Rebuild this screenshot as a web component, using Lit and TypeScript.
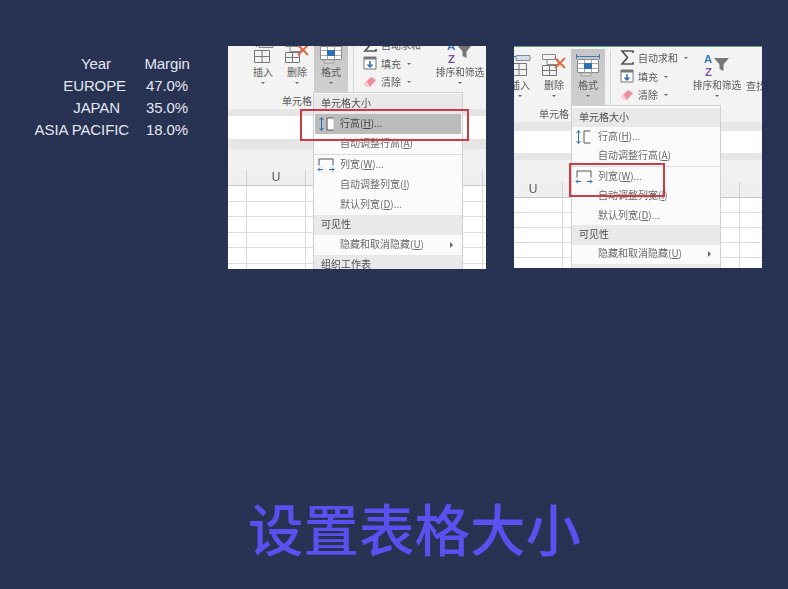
import { LitElement, html, css, svg } from "lit";
import { customElement, property } from "lit/decorators.js";

interface ShotConfig {
  width: number; height: number; left: number; top: number; greenTop: boolean;
  bands: number[]; gridOffset: number; uCell: number; rowH: number;
  menu: { x: number; y: number; pad: number; rowH: number };
  hot: boolean; red: { x: number; y: number; w: number; h: number };
}

const icons = {
  insert: svg`<svg width="26" height="24" viewBox="0 0 26 24" fill="none"><path d="M9 2.500h14v5H9z" fill="#cfe0ee" stroke="#8a8a8a"/><path d="M7 0.500 2 3.500l5 3M2 3.500h7" stroke="#3a7ab8" stroke-width="1.200"/><path d="M4.500 10.500h15v12h-15zM4.500 16.500h15M12 10.500v12" stroke="#777"/></svg>`,
  del: svg`<svg width="26" height="24" viewBox="0 0 26 24" fill="none"><path d="M1.500 1.500h13v5h-13zM6 6.500h11v5H6z" stroke="#8a8a8a"/><path d="M1.500 12.500h14v10h-14zM1.500 17.500h14M8.500 12.500v10" stroke="#777"/><path d="m14 5 10 10M24 5 14 15" stroke="#e2653f" stroke-width="1.800"/></svg>`,
  format: svg`<svg width="24" height="24" viewBox="0 0 24 24" fill="none"><path d="M0.500 1v5M23.500 1v5M1 3.500h22" stroke="#3a7ab8"/><path d="M1.500 6.500h21v13h-21z" fill="#fff" stroke="#888"/><path d="M8.500 6.500v13M15.500 6.500v13M1.500 10.500h21M1.500 15.500h21" stroke="#aaa"/><path d="M8 10h8v6H8z" fill="#2f6fb5"/><path d="M5 20h10v3H5z" fill="#ddd" stroke="#999"/></svg>`,
  sum: svg`<svg width="14" height="15" viewBox="0 0 14 15" fill="none"><path d="M13 3V1H2l5.500 6.500L2 14h11v-2" stroke="#555" stroke-width="1.700"/></svg>`,
  fill: svg`<svg width="14" height="14" viewBox="0 0 14 14" fill="none"><path d="M1 1h12v12H1z" fill="#fff" stroke="#777"/><path d="M1 1h12v2.500H1z" fill="#777"/><path d="M7 5v6M4.500 8.500 7 11l2.500-2.500" stroke="#2b6fb7" stroke-width="1.500"/></svg>`,
  eraser: svg`<svg width="14" height="12" viewBox="0 0 14 12"><path d="m1 8 7-7 5 3-6 7H4z" fill="#ef8d9c"/><path d="M1 8l3 3h3L4 6z" fill="#f7d3d8"/></svg>`,
  sort: svg`<svg width="26" height="24" viewBox="0 0 26 24" fill="none"><path d="M10 5h15l-5.500 6.500V18L15.500 16v-4.500z" fill="#777"/><text x="0" y="10" font-family="Liberation Sans" font-weight="700" font-size="11.500" fill="#3a7ab8">A</text><text x="1" y="23" font-family="Liberation Sans" font-weight="700" font-size="11.500" fill="#7f4da8">Z</text></svg>`,
  rowIcon: svg`<svg width="17" height="16" viewBox="0 0 17 16" fill="none"><path d="M3.500 2v12M1.500 4 3.500 1.500 5.500 4M1.500 12l2 2.500 2-2.500" stroke="#2b6fb7"/><path d="M15.500 2H9v12h6.500" stroke="#555" fill="#fff"/></svg>`,
  colIcon: svg`<svg width="18" height="15" viewBox="0 0 18 15" fill="none"><path d="M2 8V1.500h14V8" stroke="#555"/><path d="M1 12h5M12 12h5M3 10l-2 2 2 2M15 10l2 2-2 2" stroke="#2b6fb7"/></svg>`,
};

@customElement("excel-shot")
class ExcelShot extends LitElement {
  @property({ attribute: false }) config!: ShotConfig;

  static styles = css`
    :host { display: block; flex: none; }
    .shot { position: relative; overflow: hidden; background: #fff; font-family: "Noto Sans CJK SC", sans-serif; color: #5a5a5a; font-size: 10px; }
    .sheet { filter: blur(0.45px); }
    .green { position: absolute; top: 0; left: 0; right: 0; height: 1px; background: #5f9f7a; z-index: 1; }
    .ribbon { display: flex; height: 76px; background: #f3f3f3; box-sizing: border-box; padding-top: 3px; }
    .group { display: flex; flex-direction: column; flex: none; width: 102px; }
    .btns { display: flex; height: 56px; }
    .btn { width: 34px; display: flex; flex-direction: column; align-items: center; box-sizing: border-box; padding-top: 3px; }
    .btn.active { background: linear-gradient(#c6c6c6, #cfcfcf); }
    .btn svg { flex: none; }
    .ic { height: 26px; display: flex; align-items: center; justify-content: center; }
    .lbl { line-height: 14px; white-space: nowrap; }
    .caret { margin-top: 3px; width: 0; height: 0; border: 2px solid transparent; border-top: 2.500px solid #666; }
    .gname { text-align: center; line-height: 17px; font-size: 10px; }
    .vsep { width: 1px; height: 68px; background: #d4d4d4; margin: 1px 4px 0 5px; flex: none; }
    .edit { width: 75px; flex: none; display: flex; flex-direction: column; gap: 3.500px; padding: 1px 0 0 5px; box-sizing: border-box; }
    .edit div { display: flex; align-items: center; gap: 4px; height: 15px; white-space: nowrap; }
    .edit i { width: 0; height: 0; border: 2px solid transparent; border-top: 2.500px solid #666; margin-top: 3px; margin-left: 2px; }
    .sort { width: 54px; flex: none; display: flex; flex-direction: column; align-items: center; padding-top: 3px; }
    .sort .lbl { font-size: 9.700px; }
    .sort .caret { margin-top: 3px; }
    .find { flex: none; padding: 29px 0 0 2px; white-space: nowrap; font-size: 10px; }
    .band { background: #e6e6e6; }
    .formula { background: #fff; }
    .light { background: #f1f1f1; }
    .head { display: flex; background: #efefef; border-bottom: 1px solid #c9c9c9; height: 16px; box-sizing: border-box; font-family: "Liberation Sans", sans-serif; font-size: 12px; line-height: 15px; }
    .cell { flex: none; width: 59px; box-sizing: border-box; border-right: 1px solid #d0d0d0; text-align: center; }
    .row { display: flex; border-bottom: 1px solid #dcdcdc; box-sizing: border-box; background: #fff; }
    .row .cell { border-right-color: #dcdcdc; }
    .menu { position: absolute; width: 150px; bottom: -1px; background: #fbfbfb; border: 1px solid #d0d0d0; border-bottom: 0; box-sizing: border-box; filter: blur(0.45px); }
    .section { background: #e9e9e9; padding: 0 0 3px 7px; box-sizing: border-box; color: #4d4d4d; display: flex; align-items: center; }
    .item { padding: 0 0 3px 26px; box-sizing: border-box; color: #6b6b6b; display: flex; align-items: center; position: relative; white-space: nowrap; }
    .item.hot { background: #bcbcbc; margin: 0 1px; padding-left: 25px; color: #444; }
    .item svg { position: absolute; left: 3px; top: 50%; transform: translateY(-50%); }
    .item b { position: absolute; right: 9px; top: 50%; margin-top: -3px; width: 0; height: 0; border: 3px solid transparent; border-left: 3.500px solid #666; border-right: 0; }
    .line { height: 1px; background: #dcdcdc; }
    u { text-decoration-thickness: 1px; }
    .red { position: absolute; border: 2px solid #d03a44; box-sizing: border-box; }
  `;

  render() {
    const c = this.config;
    const rows = [0, 1, 2, 3, 4, 5];
    const cells = [0, 1, 2, 3, 4, 5];
    const headCells = cells.map((i) => html`<div class="cell">${i === c.uCell ? "U" : ""}</div>`);
    const m = c.menu;
    const h = `height:${m.rowH}px`;
    return html`
      <div class="shot" style="width:${c.width}px;height:${c.height}px">
        ${c.greenTop ? html`<div class="green"></div>` : ""}
        <div class="sheet" style="margin-top:${c.top}px">
          <div class="ribbon">
            <div style="display:flex;flex:none;margin-left:${c.left}px">
              <div class="group">
                <div class="btns">
                  <div class="btn"><div class="ic">${icons.insert}</div><div class="lbl">插入</div><div class="caret"></div></div>
                  <div class="btn"><div class="ic">${icons.del}</div><div class="lbl">删除</div><div class="caret"></div></div>
                  <div class="btn active"><div class="ic">${icons.format}</div><div class="lbl">格式</div><div class="caret"></div></div>
                </div>
                <div class="gname">单元格</div>
              </div>
              <div class="vsep"></div>
              <div class="edit">
                <div>${icons.sum}<span>自动求和</span><i></i></div>
                <div>${icons.fill}<span>填充</span><i></i></div>
                <div>${icons.eraser}<span>清除</span><i></i></div>
              </div>
              <div class="sort"><div class="ic">${icons.sort}</div><div class="lbl">排序和筛选</div><div class="caret"></div></div>
              <div class="find">查找</div>
            </div>
          </div>
          <div class="band" style="height:${c.bands[0]}px"></div>
          <div class="formula" style="height:${c.bands[1]}px"></div>
          <div class="band" style="height:${c.bands[2]}px"></div>
          <div class="light" style="height:${c.bands[3]}px"></div>
          <div class="head" style="margin-left:${c.gridOffset}px">${headCells}</div>
          ${rows.map(() => html`<div class="row" style="height:${c.rowH}px;margin-left:${c.gridOffset}px">${cells.map(() => html`<div class="cell"></div>`)}</div>`)}
        </div>
        <div class="menu" style="left:${m.x}px;top:${m.y}px;padding-top:${m.pad}px">
          <div class="section" style=${h}>单元格大小</div>
          <div class="item ${c.hot ? "hot" : ""}" style=${h}>${icons.rowIcon}<span>行高(<u>H</u>)...</span></div>
          <div class="item" style=${h}><span>自动调整行高(<u>A</u>)</span></div>
          <div class="line"></div>
          <div class="item" style=${h}>${icons.colIcon}<span>列宽(<u>W</u>)...</span></div>
          <div class="item" style=${h}><span>自动调整列宽(<u>I</u>)</span></div>
          <div class="item" style=${h}><span>默认列宽(<u>D</u>)...</span></div>
          <div class="section" style=${h}>可见性</div>
          <div class="item" style=${h}><span>隐藏和取消隐藏(<u>U</u>)</span><b></b></div>
          <div class="section" style=${h}>组织工作表</div>
        </div>
        <div class="red" style="left:${c.red.x}px;top:${c.red.y}px;width:${c.red.w}px;height:${c.red.h}px"></div>
      </div>
    `;
  }
}

const shots: ShotConfig[] = [
  {
    width: 258, height: 223, left: 18, top: -13, greenTop: false,
    bands: [7, 23, 10, 21], gridOffset: -40, uCell: 1, rowH: 15.5,
    menu: { x: 85, y: 46, pad: 1, rowH: 20 }, hot: true,
    red: { x: 72, y: 63, w: 169, h: 32 },
  },
  {
    width: 248, height: 222, left: -11, top: 0, greenTop: true,
    bands: [9, 22, 7, 22], gridOffset: -10, uCell: 0, rowH: 15,
    menu: { x: 57, y: 59, pad: 2, rowH: 19.4 }, hot: false,
    red: { x: 55, y: 117, w: 96, h: 34 },
  },
];

const tableRows = [
  { name: "Year", value: "Margin", inset: 18 },
  { name: "EUROPE", value: "47.0%", inset: 3 },
  { name: "JAPAN", value: "35.0%", inset: 9 },
  { name: "ASIA PACIFIC", value: "18.0%", inset: 0 },
];

@customElement("app-root")
export class AppRoot extends LitElement {
  static styles = css`
    :host { display: block; width: 788px; height: 589px; background: #283354; overflow: hidden; }
    .top { display: flex; padding-top: 46px; }
    .table { width: 192px; margin-right: 36px; padding-top: 7px; flex: none; font-family: "Liberation Sans", Arial, sans-serif; font-size: 15px; color: #e4e7f2; letter-spacing: -0.100px; }
    .trow { display: flex; height: 22px; line-height: 22px; }
    .name { width: 129px; text-align: right; box-sizing: border-box; white-space: nowrap; }
    .val { width: 50px; margin-left: 13px; text-align: center; }
    .shots { display: flex; gap: 28px; }
    .title { margin: 0; padding: 222px 0 0 248px; font-family: "Noto Sans CJK SC", sans-serif; font-weight: 500; font-size: 55.500px; line-height: 72px; color: #5a50f0; white-space: nowrap; }
  `;

  render() {
    return html`
      <div class="top">
        <div class="table">
          ${tableRows.map((r) => html`<div class="trow"><div class="name" style="padding-right:${r.inset}px">${r.name}</div><div class="val">${r.value}</div></div>`)}
        </div>
        <div class="shots">
          ${shots.map((s) => html`<excel-shot .config=${s}></excel-shot>`)}
        </div>
      </div>
      <h1 class="title">设置表格大小</h1>
    `;
  }
}
